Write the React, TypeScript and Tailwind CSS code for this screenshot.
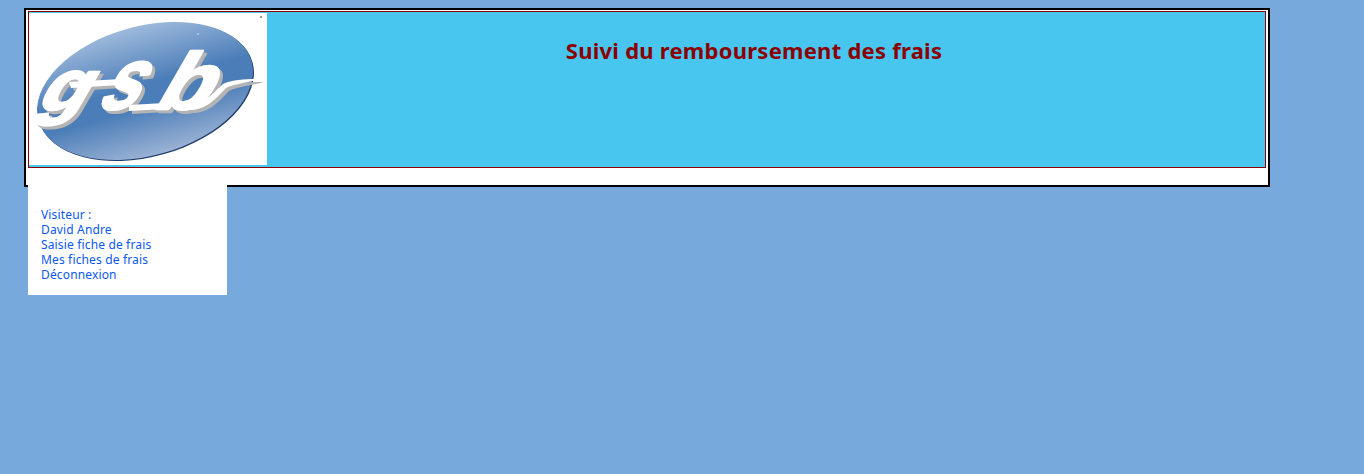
const letters = [
  { char: 'g', x: 5, y: 97, size: 72, stretch: 1.1 },
  { char: 's', x: 66, y: 96, size: 88, stretch: 0.78 },
  { char: 'b', x: 122, y: 96, size: 80, stretch: 1.1 },
];

function GsbLogo() {
  return (
    <svg width="238" height="152" viewBox="0 0 238 152" className="block shrink-0 bg-white">
      <defs>
        <linearGradient id="oval" x1="0" y1="0" x2="0" y2="1">
          <stop offset="0" stopColor="#9db9db" />
          <stop offset="0.45" stopColor="#4b7db8" />
          <stop offset="0.62" stopColor="#4b7db8" />
          <stop offset="1" stopColor="#9ab2d4" />
        </linearGradient>
        <filter id="soft" x="-5%" y="-5%" width="110%" height="110%">
          <feGaussianBlur stdDeviation="0.5" />
        </filter>
        <filter id="raised" x="-10%" y="-10%" width="125%" height="125%">
          <feDropShadow dx="3" dy="3" stdDeviation="0.6" floodColor="#b4b4b4" />
        </filter>
      </defs>
      <g filter="url(#soft)">
        <ellipse cx="117" cy="79" rx="110.6" ry="64.7" transform="rotate(-15.5 117 79)" fill="#1f3a68" />
        <ellipse cx="116" cy="78" rx="110.6" ry="64.7" transform="rotate(-15.5 116 78)" fill="url(#oval)" />
      </g>
      <g
        filter="url(#raised)"
        fontFamily="'Liberation Sans', sans-serif"
        fontWeight="700"
        fill="#ffffff"
        stroke="#ffffff"
        strokeWidth="2.5"
        strokeLinejoin="round"
      >
        {letters.map((l) => (
          <text key={l.char} transform={`translate(${l.x} ${l.y}) skewX(-30) scale(${l.stretch} 1)`} fontSize={l.size}>
            {l.char}
          </text>
        ))}
        <path strokeWidth="0" d="M160 90 C176 92 184 80 194 71 C204 66 220 66 232 66 C218 70 204 71 197 75 C188 84 178 98 158 97 Z" />
        <path strokeWidth="0" d="M40 69 L92 66 L90 72 L42 75 Z" />
        <path strokeWidth="0" d="M100 92 L136 90 L134 96 L100 98 Z" />
      </g>
      <rect x="231" y="3" width="2" height="2" fill="#9a9a9a" />
      <rect x="168" y="20" width="2" height="2" fill="#a9c2e0" />
    </svg>
  );
}

export default function App() {
  return (
    <div className="min-h-[474px] bg-[#77a9dc] pt-2 pl-6 font-['Noto_Sans',sans-serif]">
      <div className="box-border h-[179px] w-[1246px] border-2 border-black bg-white pt-px pr-[2px] pl-[2px]">
        <div className="flex h-[157px] border border-[#8b0000] bg-[#49c6f0] pt-px">
          <GsbLogo />
          <div className="flex-1 pt-[19px] pr-[24px] text-center">
            <h1 className="text-[22px] leading-[36px] font-bold tracking-[0.25px] text-[#8b0000]">Suivi du remboursement des frais</h1>
          </div>
        </div>
      </div>
      <div className="relative mt-[-2px] ml-1 h-[110px] w-[199px] bg-white pt-[22px] pl-[13px] text-[12px] leading-[15px] tracking-[0.15px] text-[#0a58f0]">
        <div>Visiteur :</div>
        <div>David Andre</div>
        <div>Saisie fiche de frais</div>
        <div>Mes fiches de frais</div>
        <div>Déconnexion</div>
      </div>
    </div>
  );
}
